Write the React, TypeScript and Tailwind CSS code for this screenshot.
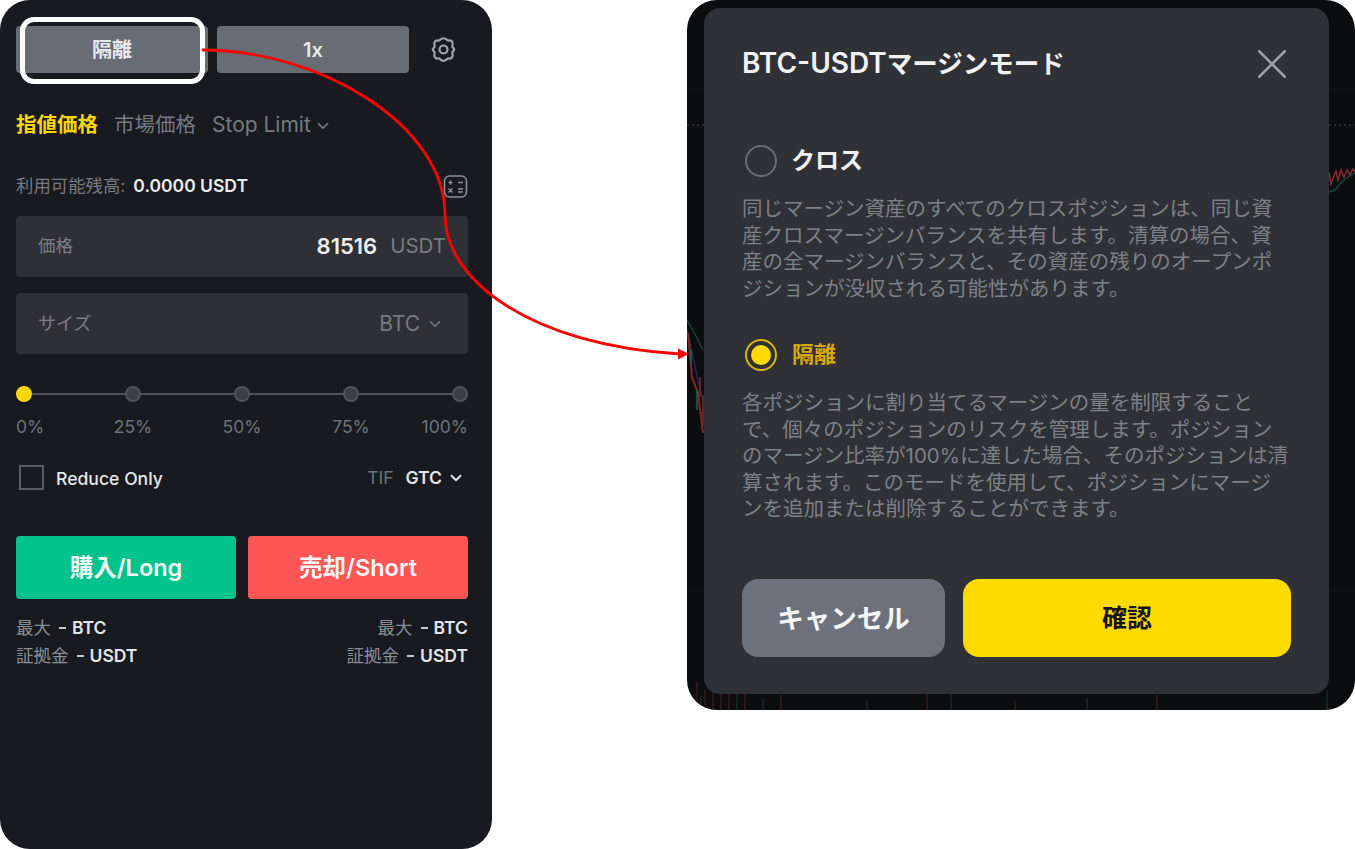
import { ChevronDown } from 'lucide-react';

const FONT = '[font-family:Inter,"Noto_Sans_CJK_JP",sans-serif]';

function Marks({ value, unit, right }: { value: string; unit: string; right?: boolean }) {
  return (
    <div className={`flex items-center text-[17.5px] font-semibold leading-[28px] ${right ? 'justify-end' : 'justify-start'}`}>
      <span className="font-normal text-[#8b8e96]">{value}</span>
      <span className="ml-[8px] mr-[6px] h-[2px] w-[7px] bg-[#c8c9cd]" />
      <span className="text-[#e4e5e8]">{unit}</span>
    </div>
  );
}

function GearIcon() {
  return (
    <svg className="ml-[21px] h-[27px] w-[27px] text-[#a4a6ab]" viewBox="0 0 27 27" fill="none" stroke="currentColor" strokeWidth="2.200" strokeLinejoin="round">
      <path d="M10.500 3.500C12 1.800 15 1.800 16.500 3.500C17.300 4.400 18.200 4.700 19.400 4.500C21.600 4.100 23.200 6.700 22.500 8.800C22.100 9.900 22.300 10.900 23 11.700C24.600 13 24.600 14 23 15.300C22.300 16.100 22.100 17.100 22.500 18.200C23.200 20.300 21.600 22.900 19.400 22.500C18.200 22.300 17.300 22.600 16.500 23.500C15 25.200 12 25.200 10.500 23.500C9.700 22.600 8.800 22.300 7.600 22.500C5.400 22.900 3.800 20.300 4.500 18.200C4.900 17.100 4.700 16.100 4 15.300C2.400 14 2.400 13 4 11.700C4.700 10.900 4.900 9.900 4.500 8.800C3.800 6.700 5.400 4.100 7.600 4.500C8.800 4.700 9.700 4.400 10.500 3.500Z" />
      <circle cx="13.500" cy="13.500" r="4" />
    </svg>
  );
}

function OrderPanel() {
  return (
    <div className="relative flex h-[849px] w-[492px] shrink-0 flex-col rounded-[30px] bg-[#181a20] pl-[16px] pr-[24px] pt-[26px]">
      {/* top buttons */}
      <div className="flex items-center">
        <button className="h-[47px] w-[192px] rounded-[4px] bg-[#686c75] text-[20px] font-semibold text-[#e8e9eb]">隔離</button>
        <button className="ml-[9px] h-[47px] w-[192px] rounded-[4px] bg-[#686c75] text-[20px] font-semibold text-[#e8e9eb]">1x</button>
        <GearIcon />
      </div>

      {/* order type tabs */}
      <div className="mt-[37px] flex items-center text-[20.5px] leading-[30px]">
        <span className="font-bold text-[#fcd600]">指値価格</span>
        <span className="ml-[16px] text-[#777a82]">市場価格</span>
        <span className="ml-[16px] text-[21px] text-[#777a82]">Stop Limit</span>
        <ChevronDown className="ml-[3px] mt-[2px] h-[18px] w-[18px] text-[#85888f]" strokeWidth={2} />
      </div>

      <div className="mt-[32px] flex h-[28px] items-center">
        <span className="text-[17.4px] text-[#777a82]">利用可能残高:</span>
        <span className="ml-[8px] text-[17.5px] font-semibold text-[#eceded]">0.0000 USDT</span>
        <svg className="ml-auto h-[25px] w-[25px] text-[#8b8e94]" viewBox="0 0 25 25" fill="none" stroke="currentColor" strokeWidth="1.600">
          <rect x="1.500" y="2" width="22" height="21" rx="5" />
          <path d="M5.500 8.500h4M7.500 6.500v4M15 8.500h5M5.500 14.500l4 4M9.500 14.500l-4 4M15 15h5M15 18h5" />
        </svg>
      </div>

      {/* price */}
      <div className="mt-[16px] flex h-[61px] items-center justify-between rounded-[4px] bg-[#2f3035] pl-[22px] pr-[22px]">
        <span className="text-[17.5px] text-[#7c7f86]">価格</span>
        <div className="flex items-center gap-[13px]">
          <span className="text-[22px] font-semibold text-[#eeeeef]">81516</span>
          <span className="text-[20.5px] text-[#777a82]">USDT</span>
        </div>
      </div>

      {/* size */}
      <div className="mt-[16px] flex h-[61px] items-center justify-between rounded-[4px] bg-[#2f3035] pl-[22px] pr-[24px]">
        <span className="text-[18px] text-[#7c7f86]">サイズ</span>
        <div className="flex items-center gap-[6px] text-[#777a82]">
          <span className="text-[21px]">BTC</span>
          <ChevronDown className="h-[18px] w-[18px]" strokeWidth={2} />
        </div>
      </div>

      {/* slider */}
      <div className="relative mt-[32px] flex h-[16px] items-center justify-between">
        <div className="absolute inset-x-0 top-[7px] h-[2px] bg-[#50525a]" />
        <div className="relative h-[16px] w-[16px] rounded-full bg-[#fcd600]" />
        {[0, 1, 2, 3].map((i) => (
          <div key={i} className="relative h-[16px] w-[16px] rounded-full border-[2px] border-[#50525a] bg-[#3c3e44]" />
        ))}
      </div>
      <div className="mt-[13px] flex justify-between text-[17.5px] leading-[24px] text-[#6f7279]">
        <span className="flex w-[16px] justify-start whitespace-nowrap">0%</span>
        <span className="flex w-[16px] justify-center whitespace-nowrap">25%</span>
        <span className="flex w-[16px] justify-center whitespace-nowrap">50%</span>
        <span className="flex w-[16px] justify-center whitespace-nowrap">75%</span>
        <span className="flex w-[16px] justify-end whitespace-nowrap">100%</span>
      </div>

      {/* reduce only / TIF */}
      <div className="mt-[24px] flex h-[28px] items-center pl-[3px]">
        <div className="h-[25px] w-[25px] border-[2px] border-[#5a5d64]" />
        <span className="ml-[12px] mt-[4px] text-[17.6px] font-medium text-[#e6e7e9]">Reduce Only</span>
        <span className="ml-auto mt-[2px] text-[17.5px] text-[#6f7279]">TIF</span>
        <span className="ml-[12px] mt-[2px] text-[17.5px] font-semibold text-[#e4e5e8]">GTC</span>
        <ChevronDown className="ml-[5px] mr-[3px] mt-[2px] h-[18px] w-[18px] text-[#e4e5e8]" strokeWidth={2.5} />
      </div>

      {/* buy / sell */}
      <div className="mt-[45px] flex gap-[12px]">
        <button className="h-[63px] flex-1 rounded-[4px] bg-[#03c38c] text-[23.5px] font-semibold text-[#f3fbf8]">購入/Long</button>
        <button className="h-[63px] flex-1 rounded-[4px] bg-[#fe5555] text-[23.5px] font-semibold text-[#fff3f3]">売却/Short</button>
      </div>

      <div className="mt-[15px] flex justify-between">
        <div>
          <Marks value="最大" unit="BTC" />
          <Marks value="証拠金" unit="USDT" />
        </div>
        <div>
          <Marks value="最大" unit="BTC" right />
          <Marks value="証拠金" unit="USDT" right />
        </div>
      </div>
    </div>
  );
}

function Radio({ on }: { on?: boolean }) {
  if (on) {
    return (
      <span className="flex h-[32px] w-[32px] items-center justify-center rounded-full border-[2px] border-[#d9b70c]">
        <span className="h-[20px] w-[20px] rounded-full bg-[#fcd900]" />
      </span>
    );
  }
  return <span className="h-[32px] w-[32px] rounded-full border-[2px] border-[#6a6d75]" />;
}

function MarginDialog() {
  return (
    <div className="relative h-[686px] w-[625px] rounded-[16px] bg-[#303136] px-[38px]">
      <div className="flex items-center justify-between pr-[4px] pt-[34px]">
        <h2 className="text-[25.5px] font-semibold leading-[42px] text-[#f2f2f3]">
          <span className="text-[28px]">BTC-USDT</span>マージンモード
        </h2>
        <svg className="h-[30px] w-[30px] text-[#9ea1aa]" viewBox="0 0 30 30" fill="none" stroke="currentColor" strokeWidth="2.500">
          <path d="M1.500 1.500L28.500 28.500M28.500 1.500L1.500 28.500" />
        </svg>
      </div>

      <div className="mt-[58px] flex items-center gap-[14px] pl-[3px]">
        <Radio />
        <span className="text-[24px] font-semibold text-[#f0f0f1]">クロス</span>
      </div>
      <p className="mt-[17px] whitespace-nowrap text-[20.5px] leading-[26.6px] text-[#7d8087]">
        同じマージン資産のすべてのクロスポジションは、同じ資<br />
        産クロスマージンバランスを共有します。清算の場合、資<br />
        産の全マージンバランスと、その資産の残りのオープンポ<br />
        ジションが没収される可能性があります。
      </p>

      <div className="mt-[36px] flex items-center gap-[15px] pl-[3px]">
        <Radio on />
        <span className="text-[22px] font-semibold text-[#d9a708]">隔離</span>
      </div>
      <p className="mt-[19px] whitespace-nowrap text-[20.5px] leading-[26.4px] text-[#7d8087]">
        各ポジションに割り当てるマージンの量を制限すること<br />
        で、個々のポジションのリスクを管理します。ポジション<br />
        のマージン比率が100%に達した場合、そのポジションは清<br />
        算されます。このモードを使用して、ポジションにマージ<br />
        ンを追加または削除することができます。
      </p>

      <div className="mt-[57px] flex gap-[18px]">
        <button className="h-[78px] w-[204px] rounded-[16px] bg-[#6d717b] text-[26.5px] font-bold text-[#f5f5f6]">キャンセル</button>
        <button className="h-[78px] w-[329px] rounded-[16px] bg-[#fddb00] text-[25px] font-semibold text-[#16161a]">確認</button>
      </div>
    </div>
  );
}

function ChartBackdrop() {
  return (
    <svg className="absolute inset-0 h-full w-full" viewBox="0 0 668 710" fill="none">
      <path d="M0 125h17M642 125h26" stroke="#1a5a46" strokeWidth="1" strokeDasharray="2 3" />
      <path d="M0 90h668M0 160h668M0 590h668" stroke="#14161a" strokeWidth="1" />
      <path d="M642 172l2 12 3 -8 2 -5 2 9 3 -10 3 7 3 -7 3 5 3 -6 3 4" stroke="#8a2b32" strokeWidth="1.500" />
      <path d="M642 192l6 -2 5 -6 6 -6 9 -5" stroke="#14483a" strokeWidth="1.500" />
      <path d="M0 320l8 14 8 16" stroke="#14483a" strokeWidth="1.500" />
      <path d="M0 330l5 22 5 24 6 24" stroke="#2c2a44" strokeWidth="1.500" />
      <path d="M1 333l2 22 2 22 6 16 5 40" stroke="#7d2a30" strokeWidth="2" />
      <path d="M13 377v20M16 395v30" stroke="#7d2a30" strokeWidth="1.500" />
      <path d="M4 350v14M10 390v20" stroke="#14684f" strokeWidth="1.500" />
      <path d="M10 682v28M18 690v20M26 686v24M34 694v16M42 684v26M58 692v18M94 695v15M240 692v18M328 700v10M470 695v15" stroke="#4a2226" strokeWidth="1" />
      <path d="M14 695v15M50 690v20M76 698v12M180 700v10M264 694v16M400 698v12M640 690v20" stroke="#143a30" strokeWidth="1" />
    </svg>
  );
}

export default function App() {
  return (
    <div className={`relative flex h-[849px] w-[1355px] items-start overflow-hidden bg-white ${FONT}`}>
      <OrderPanel />
      <div className="relative ml-[195px] h-[710px] w-[668px] overflow-hidden rounded-[30px] bg-[#0c0d0f] pl-[17px] pt-[8px]">
        <ChartBackdrop />
        <MarginDialog />
      </div>

      {/* highlight ring around the margin mode button */}
      <div className="absolute left-[20px] top-[17px] h-[67px] w-[185px] rounded-[14px] border-[5px] border-white" />

      {/* red callout arrow */}
      <svg className="pointer-events-none absolute inset-0 h-full w-full" viewBox="0 0 1355 849" fill="none">
        <path d="M202 50C320 50 445 125 445 215C445 280 530 345 680 354" stroke="#ff0000" strokeWidth="2.800" />
        <path d="M689 354l-11 -5.500v11z" fill="#ff0000" />
      </svg>
    </div>
  );
}
